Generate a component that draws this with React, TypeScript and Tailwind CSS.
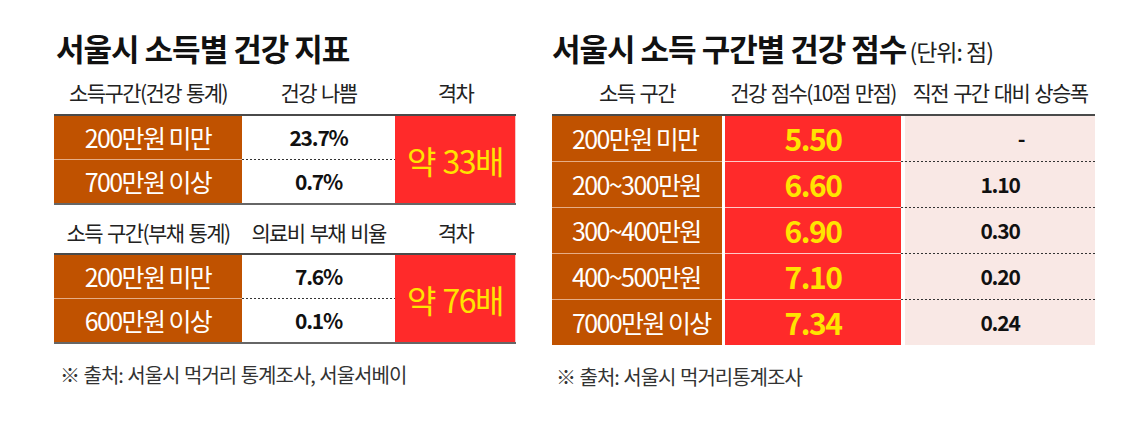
const font = "font-['Noto_Sans_CJK_KR','Noto_Sans_CJK_SC',sans-serif]";

type GapTableProps = {
  headers: string[];
  rows: { label: string; value: string }[];
  ratio: string;
  headPad: string;
};

// left side: two small tables with a merged "격차" cell
function GapTable({ headers, rows, ratio, headPad }: GapTableProps) {
  return (
    <div>
      <div
        className={`grid grid-cols-[188px_153px_121px] h-[50px] items-center border-b-2 border-[#4a4a4a] text-[21px] tracking-[-1.6px] [word-spacing:2px] text-[#222] ${headPad}`}
      >
        {headers.map((h) => (
          <div key={h} className="text-center whitespace-nowrap">
            {h}
          </div>
        ))}
      </div>
      <div className="grid grid-cols-[188px_153px_121px] border-b-2 border-[#666]">
        <div className="flex flex-col bg-[#c05200]">
          {rows.map((r, i) => (
            <div
              key={r.label}
              className={`flex h-[43px] items-center justify-center text-[25px] tracking-[-1.6px] text-white ${
                i === 0 ? "box-content border-b border-[#e6ad86]" : ""
              }`}
            >
              {r.label}
            </div>
          ))}
        </div>
        <div className="flex flex-col bg-white">
          {rows.map((r, i) => (
            <div key={r.value}>
              <div className="flex h-[43px] items-center justify-center text-[21px] font-bold tracking-[-1.2px] text-[#111]">
                {r.value}
              </div>
              {i === 0 && (
                <div className="h-px bg-[linear-gradient(to_right,#333_50%,transparent_50%)] bg-[length:4px_1px]" />
              )}
            </div>
          ))}
        </div>
        <div className="flex items-center justify-center border-r border-[#f6c8c8] bg-[#ff2a2a] text-[32px] tracking-[-1.5px] [word-spacing:2px] text-[#ffe400]">
          {ratio}
        </div>
      </div>
    </div>
  );
}

const scores = [
  { label: "200만원 미만", score: "5.50", diff: "-" },
  { label: "200~300만원", score: "6.60", diff: "1.10" },
  { label: "300~400만원", score: "6.90", diff: "0.30" },
  { label: "400~500만원", score: "7.10", diff: "0.20" },
  { label: "7000만원 이상", score: "7.34", diff: "0.24" },
];

export default function App() {
  return (
    <div className={`flex h-[421px] w-[1140px] bg-white pt-[30px] ${font}`}>
      {/* 왼쪽: 소득별 건강 지표 */}
      <div className="ml-[54px] w-[462px]">
        <h2 className="h-[36px] whitespace-nowrap pl-[2px] text-[31px] font-bold leading-[36px] tracking-[-1px] text-[#111]">
          서울시 소득별 건강 지표
        </h2>
        <GapTable
          headers={["소득구간(건강 통계)", "건강 나쁨", "격차"]}
          rows={[
            { label: "200만원 미만", value: "23.7%" },
            { label: "700만원 이상", value: "0.7%" },
          ]}
          ratio="약 33배"
          headPad="pt-[6px]"
        />
        <GapTable
          headers={["소득 구간(부채 통계)", "의료비 부채 비율", "격차"]}
          rows={[
            { label: "200만원 미만", value: "7.6%" },
            { label: "600만원 이상", value: "0.1%" },
          ]}
          ratio="약 76배"
          headPad="pt-[8px]"
        />
        <p className="mt-[19px] whitespace-nowrap pl-[6px] text-[20px] leading-[24px] tracking-[-1px] [word-spacing:1px] text-[#333]">
          ※ 출처: 서울시 먹거리 통계조사, 서울서베이
        </p>
      </div>

      {/* 오른쪽: 소득 구간별 건강 점수 */}
      <div className="ml-[36px] w-[543px]">
        <h2 className="h-[36px] whitespace-nowrap text-[31px] font-bold leading-[36px] tracking-[-1px] text-[#111]">
          서울시 소득 구간별 건강 점수
          <span className="ml-[3px] text-[23px] font-normal tracking-[-1px] text-[#222]">(단위: 점)</span>
        </h2>
        <div className="flex h-[50px] items-center border-b-2 border-[#4a4a4a] pt-[6px] text-[21px] tracking-[-1.6px] [word-spacing:2px] text-[#222]">
          <div className="w-[170px] whitespace-nowrap text-center">소득 구간</div>
          <div className="ml-[3px] w-[176px] whitespace-nowrap text-center">건강 점수(10점 만점)</div>
          <div className="ml-[4px] w-[190px] whitespace-nowrap text-center">직전 구간 대비 상승폭</div>
        </div>
        {scores.map((s, i) => (
          <div key={s.label}>
            <div className="flex h-[45px]">
              <div className="flex w-[170px] items-center whitespace-nowrap bg-[#c05200] pl-[20px] text-[25px] tracking-[-1.6px] text-white">
                {s.label}
              </div>
              <div className="ml-[3px] flex w-[176px] items-center justify-center bg-[#ff2a2a] text-[30px] font-bold tracking-[-1.5px] text-[#ffe400]">
                {s.score}
              </div>
              <div className="ml-[4px] flex w-[190px] items-center justify-center bg-[#f9e8e5] text-[21px] font-bold tracking-[-1.2px] text-[#111]">
                {s.diff === "-" ? <span className="ml-[42px]">-</span> : s.diff}
              </div>
            </div>
            {i < scores.length - 1 && (
              <div className="flex h-px">
                <div className="w-[170px] bg-[#e6ad86]" />
                <div className="w-[3px] bg-white" />
                <div className="w-[176px] bg-[#ffc8c8]" />
                <div className="w-[194px] bg-[#f9e8e5] bg-[linear-gradient(to_right,#333_50%,transparent_50%)] bg-[length:4px_1px]" />
              </div>
            )}
          </div>
        ))}
        <p className="mt-[20px] whitespace-nowrap pl-[4px] text-[20px] leading-[24px] tracking-[-1px] [word-spacing:1px] text-[#333]">
          ※ 출처: 서울시 먹거리통계조사
        </p>
      </div>
    </div>
  );
}
